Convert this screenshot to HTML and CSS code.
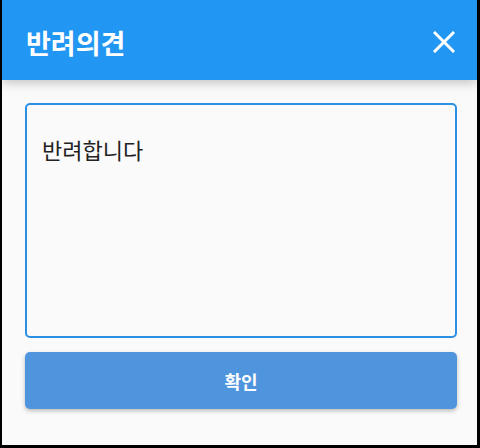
FILE: index.html
```html
<!DOCTYPE html>
<html lang="ko">
<head>
<meta charset="utf-8">
<link rel="stylesheet" href="styles.css">
</head>
<body>
<div class="dialog">
  <header class="dialog-header">
    <h1 class="dialog-title">반려의견</h1>
    <button class="close-btn" aria-label="닫기">
      <svg width="22" height="22" viewBox="0 0 22 22"><path d="M2 2L20 20M20 2L2 20" stroke="#fff" stroke-width="3" stroke-linecap="square"/></svg>
    </button>
  </header>
  <main class="dialog-body">
    <textarea class="opinion">반려합니다</textarea>
    <button class="confirm-btn">확인</button>
  </main>
</div>
</body>
</html>
```
FILE: styles.css
```css
html, body {
  margin: 0;
  padding: 0;
  background: #000;
  width: 480px;
  height: 448px;
  overflow: hidden;
}
.dialog {
  width: 475px;
  height: 445px;
  margin: 0 3px 0 2px;
  background: #fafafa;
  display: flex;
  flex-direction: column;
  font-family: "Noto Sans CJK KR", "Noto Sans", sans-serif;
}
.dialog-header {
  height: 80px;
  flex: none;
  background: #2196f3;
  display: flex;
  align-items: center;
  justify-content: space-between;
  padding: 0 22px 0 24px;
  box-shadow: 0 3px 10px rgba(0,0,0,0.22);
  position: relative;
  z-index: 1;
}
.dialog-title {
  margin: 0;
  color: #fff;
  font-size: 27px;
  font-weight: 700;
  line-height: 1;
  padding-top: 5px;
}
.close-btn {
  background: none;
  border: 0;
  padding: 0;
  width: 22px;
  height: 22px;
  display: flex;
  margin-top: 3px;
}
.dialog-body {
  flex: 1;
  display: flex;
  flex-direction: column;
  padding: 23px 20px 36px 23px;
  gap: 14px;
}
.opinion {
  box-sizing: border-box;
  height: 235px;
  width: 100%;
  resize: none;
  border: 2.5px solid #2b8fe3;
  border-radius: 5px;
  background: #fafafa;
  padding: 29px 15px;
  font-family: "Noto Sans CJK KR", "Noto Sans", sans-serif;
  font-size: 22px;
  line-height: 30px;
  color: #222;
  outline: none;
  margin: 0;
}
.confirm-btn {
  height: 57px;
  width: 100%;
  border: 0;
  border-radius: 5px;
  background: #4f95de;
  color: #fff;
  font-family: "Noto Sans CJK KR", "Noto Sans", sans-serif;
  font-size: 18px;
  font-weight: 700;
  box-shadow: 0 2px 4px rgba(0,0,0,0.25);
}
```
